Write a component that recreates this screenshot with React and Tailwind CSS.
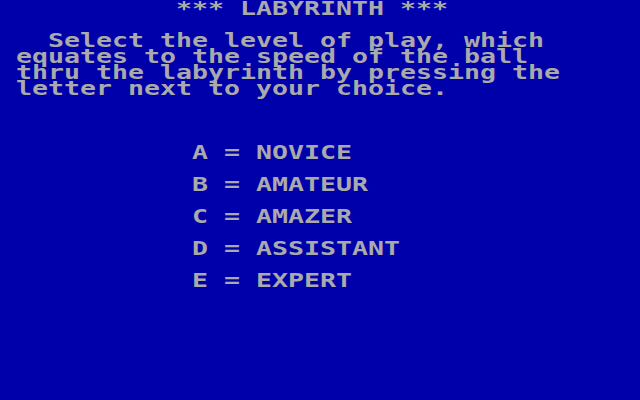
const rows = [
  "           *** LABYRINTH ***",
  "",
  "   Select the level of play, which",
  " equates to the speed of the ball",
  " thru the labyrinth by pressing the",
  " letter next to your choice.",
  "",
  "",
  "",
  "            A = NOVICE",
  "",
  "            B = AMATEUR",
  "",
  "            C = AMAZER",
  "",
  "            D = ASSISTANT",
  "",
  "            E = EXPERT",
];

export default function App() {
  return (
    <div className="w-[640px] h-[400px] overflow-hidden bg-[#0000aa] text-[#aaaaaa]">
      {/* 40x25 text mode: each cell is 16px wide, 16px tall */}
      <div className="font-['DejaVu_Sans_Mono',monospace] font-bold text-[20px] leading-[16px] whitespace-pre">
        {rows.map((line, i) => (
          <div key={i} className="h-4 origin-left scale-x-[1.329]">
            {line}
          </div>
        ))}
      </div>
    </div>
  );
}
